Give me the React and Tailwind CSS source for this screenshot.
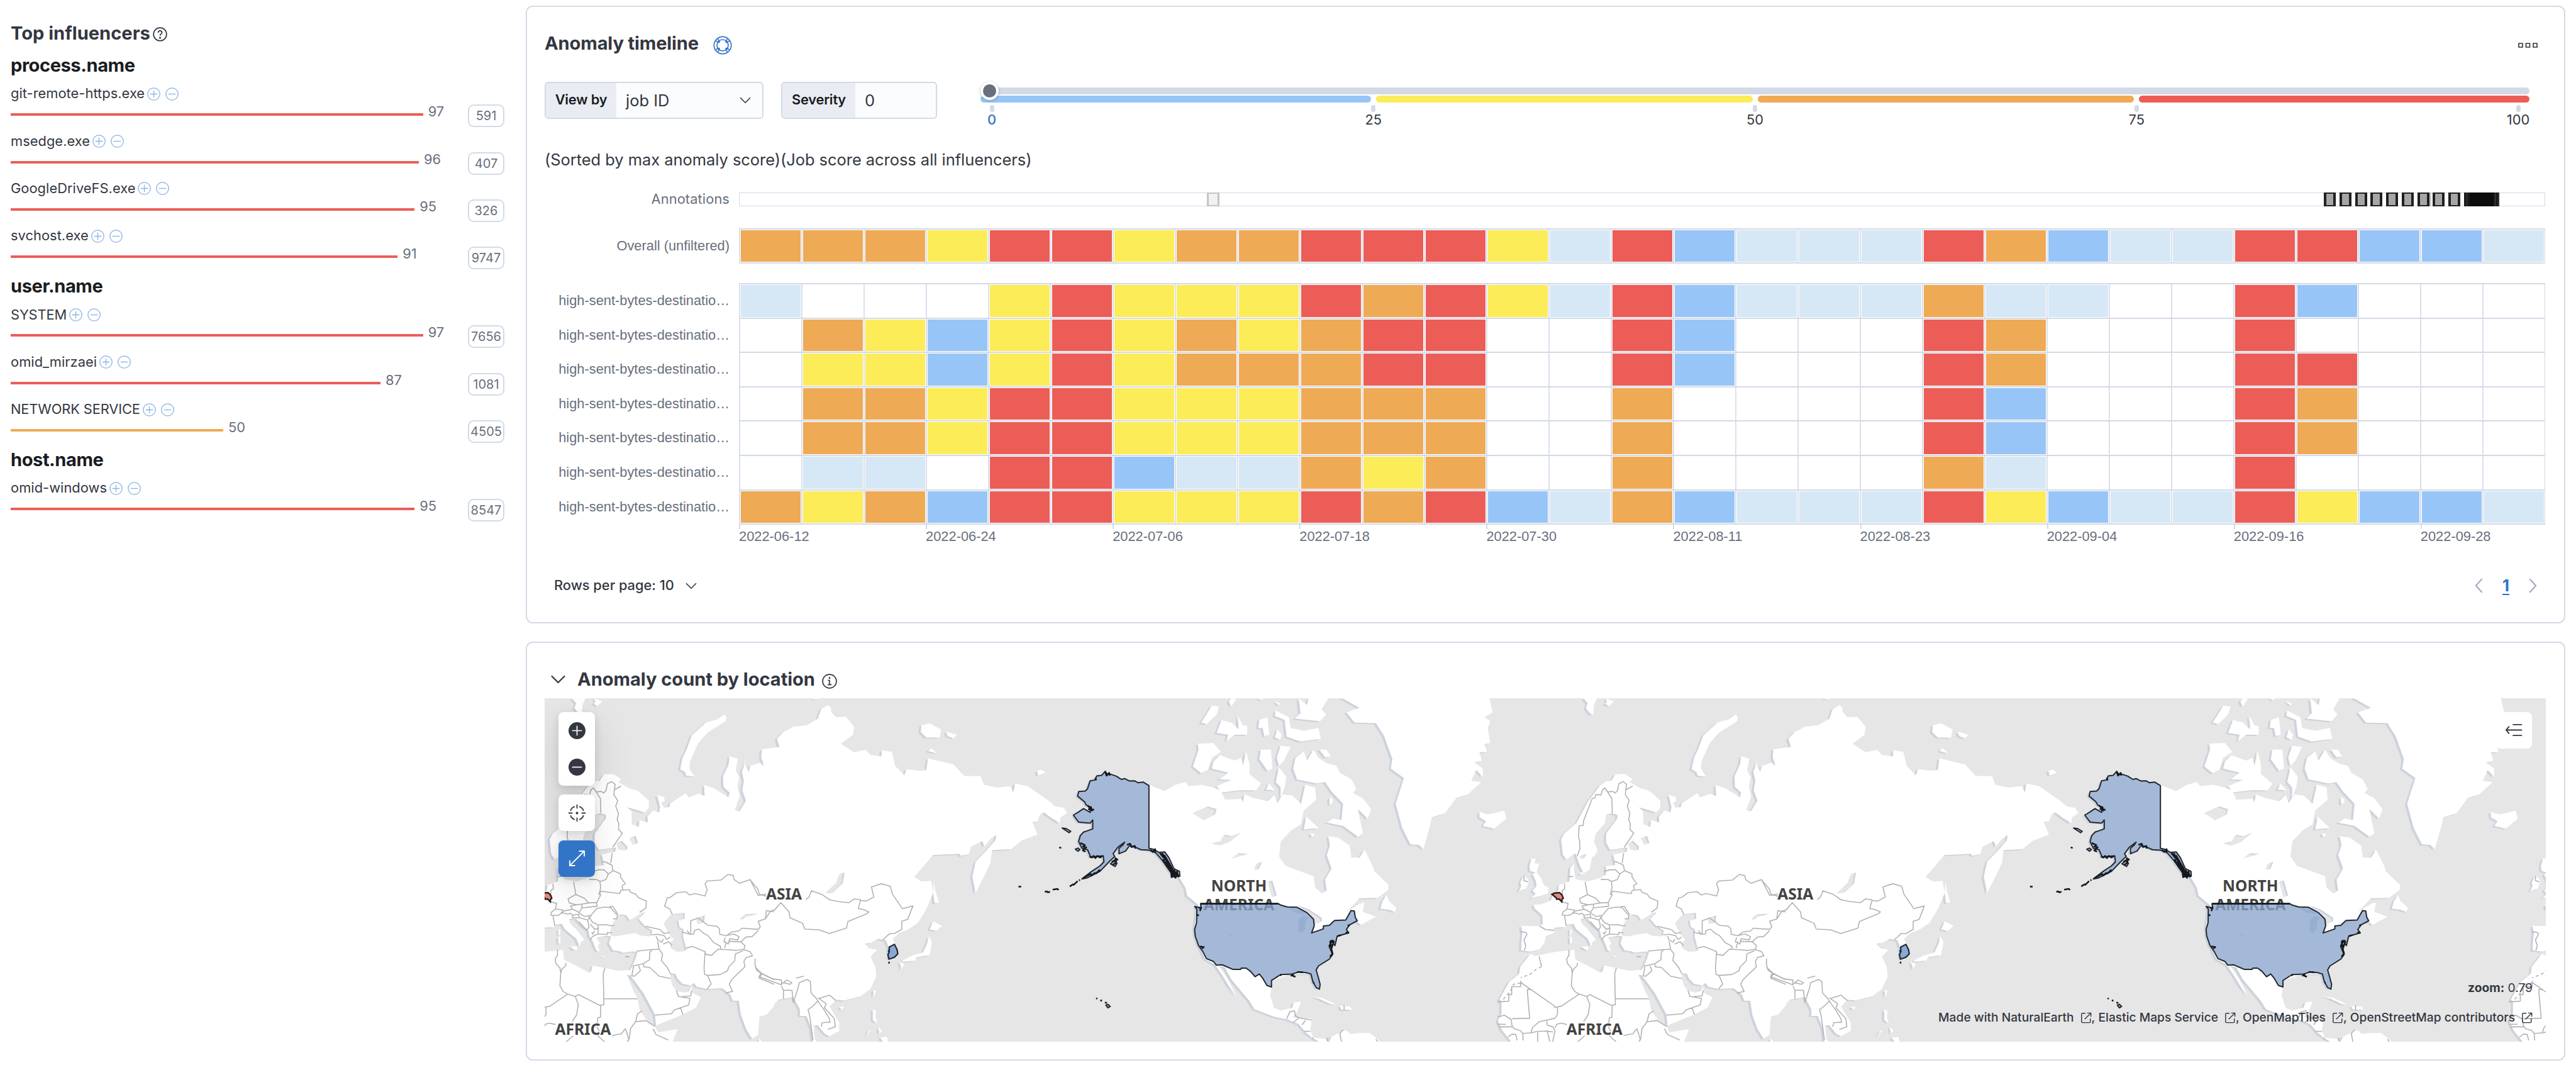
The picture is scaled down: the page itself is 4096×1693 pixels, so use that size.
import React from "react";

const SECTIONS = [
  {
    name: "process.name",
    items: [
      ["git-remote-https.exe", 97, 591],
      ["msedge.exe", 96, 407],
      ["GoogleDriveFS.exe", 95, 326],
      ["svchost.exe", 91, 9747],
    ],
  },
  {
    name: "user.name",
    items: [
      ["SYSTEM", 97, 7656],
      ["omid_mirzaei", 87, 1081],
      ["NETWORK SERVICE", 50, 4505],
    ],
  },
  { name: "host.name", items: [["omid-windows", 95, 8547]] },
];

const CELL = {
  R: "bg-[#ec5d57]",
  O: "bg-[#efaa55]",
  Y: "bg-[#fbec58]",
  B: "bg-[#98c5f7]",
  L: "bg-[#d6e7f5]",
  ".": "bg-white",
};

const OVERALL = "OOOYRRYOORRRYLRBLLLROBLLRRBBL";
const LANES = [
  "L...YRYYYRORYLRBLLLOLL..RB...",
  ".OYBYRYOYORR..RB...RO...R....",
  ".YYBYRYOOORR..RB...RO...RR...",
  ".OOYRRYYYOOO..O....RB...RO...",
  ".OOYRRYYYOOO..O....RB...RO...",
  ".LL.RRBLLOYO..O....OL...R....",
  "OYOBRRYYYRORBLOBLLLRYBLLRYBBL",
];
const DATES = [
  "2022-06-12",
  "2022-06-24",
  "2022-07-06",
  "2022-07-18",
  "2022-07-30",
  "2022-08-11",
  "2022-08-23",
  "2022-09-04",
  "2022-09-16",
  "2022-09-28",
];

function FilterIcon({ minus }) {
  return (
    <svg viewBox="0 0 16 16" className="h-[21px] w-[21px] shrink-0" fill="none" stroke="#8ab2e2" strokeWidth="1">
      <circle cx="8" cy="8" r="7.4" />
      <path d={minus ? "M3.6 8h8.8" : "M3.6 8h8.8M8 3.6v8.8"} />
    </svg>
  );
}

function Chevron({ className }) {
  return (
    <svg viewBox="0 0 24 14" className={className} fill="none" stroke="currentColor" strokeWidth="2.2" strokeLinecap="round" strokeLinejoin="round">
      <path d="M2 2l10 10L22 2" />
    </svg>
  );
}

function Influencer({ item }) {
  const [name, score, total] = item;
  const upper = name === name.toUpperCase();
  return (
    <div className="h-[75.35px]">
      <div className="flex h-[40px] items-center pt-[2px]">
        <span
          className={
            "whitespace-nowrap text-[21.84px] leading-none text-[#343741] " + (upper ? "tracking-[-0.12px]" : "tracking-[0.05px]")
          }
        >
          {name}
        </span>
        <span className="ml-[4px] flex gap-[8px]">
          <FilterIcon />
          <FilterIcon minus />
        </span>
      </div>
      <div className="flex items-start">
        <div className="flex w-[727px] items-start">
          <div
            className={"mt-[12px] h-[4px] " + (score > 74 ? "bg-[#ec5d57]" : "bg-[#efaa55]")}
            style={{ width: score * 6.76 }}
          />
          <span className="ml-[8px] text-[21.84px] leading-[19px] text-[#69707d]">{score}</span>
        </div>
        <div className="-mt-[2px] flex h-[36px] w-[58px] items-center justify-center rounded-[9px] border-2 border-[#d3dae6] text-[20px] leading-none text-[#69707d]">
          {total}
        </div>
      </div>
    </div>
  );
}

function Sidebar() {
  return (
    <aside className="w-[836px] shrink-0 pl-[17px] pt-[26px]">
      <div className="flex h-[52.5px] items-center">
        <h2 className="text-[29.1px] font-bold leading-none text-[#343741]">Top influencers</h2>
        <svg viewBox="0 0 16 16" className="ml-[4px] mt-[4px] h-[23px] w-[23px]" fill="none" stroke="#343741" strokeWidth="1.2">
          <circle cx="8" cy="8" r="7.2" />
          <path d="M5.9 6.2c0-1.3.9-2.1 2.1-2.1s2.1.8 2.1 1.9c0 1.5-2.1 1.7-2.1 3.5" />
          <circle cx="8" cy="11.9" r=".5" fill="#343741" />
        </svg>
      </div>
      {SECTIONS.map((s) => (
        <section key={s.name}>
          <h3 className="flex h-[49.8px] items-center text-[29.1px] font-bold leading-none tracking-[-0.45px] text-[#1a1c21]">
            {s.name}
          </h3>
          {s.items.map((i) => (
            <Influencer key={i[0]} item={i} />
          ))}
        </section>
      ))}
    </aside>
  );
}

function Lane({ label, cells, className }) {
  return (
    <div className="flex">
      <div className="flex w-[309px] shrink-0 items-center justify-end whitespace-nowrap pr-[15px] pt-[2px] font-['Liberation_Sans',Arial,sans-serif] text-[21.84px] text-[#69707d]">
        {label}
      </div>
      <div className={"flex w-[2872px] border-r border-t-2 border-[#d3dae6] " + className}>
        {cells.split("").map((c, i) => (
          <div key={i} className="flex-1 border-l-2 border-[#dbe0ec] p-px">
            <div className={"h-full " + CELL[c]} />
          </div>
        ))}
      </div>
    </div>
  );
}

function Severity() {
  return (
    <div className="relative ml-[69px] w-[2463px] pt-[9px]">
      <div className="h-[11px] rounded-full bg-[#d3dae6]" />
      <div className="mt-[2px] flex h-[11px] gap-[8px]">
        <div className="w-[621px] rounded-[6px] bg-[#98c5f7]" />
        <div className="w-[599px] rounded-[6px] bg-[#fbec58]" />
        <div className="w-[598px] rounded-[6px] bg-[#efaa55]" />
        <div className="flex-1 rounded-[6px] bg-[#ec5d57]" />
      </div>
      <div className="mt-[4px] flex justify-between px-[18px] text-[21.84px] leading-none text-[#343741]">
        {[0, 25, 50, 75, 100].map((v) => (
          <div key={v} className="flex w-0 flex-col items-center">
            <div className="h-[11px] w-[7px] shrink-0 rounded-full bg-[#d3dae6]" />
            <span className={"mt-[2px] " + (v === 0 ? "font-medium text-[#2f74c6]" : "")}>{v}</span>
          </div>
        ))}
      </div>
      <div className="absolute left-0 top-0 h-[29px] w-[29px] rounded-full border-[4px] border-white bg-[#69707d] shadow-[0_1px_4px_rgba(0,0,0,0.25)]" />
    </div>
  );
}

function Annotations() {
  return (
    <div className="mt-[32px] flex">
      <div className="flex w-[309px] items-center justify-end pr-[15px] text-[21.84px] leading-none tracking-[0.1px] text-[#69707d]">Annotations</div>
      <div className="relative h-[22px] w-[2872px] border border-[#d3dae6]">
        <div className="absolute -top-px left-[743px] h-[22px] w-[20px] border-x-[3px] border-y-2 border-[#c4c4c4] bg-[#f1f1f1]" />
        {[0, 1, 2, 3, 4, 5, 6, 7, 8].map((i) => (
          <div
            key={i}
            className="absolute -top-px h-[22px] w-[19px] border-x-4 border-y-2 border-[#202020] bg-[#a6a6a6]"
            style={{ left: 2519 + i * 24.75 }}
          />
        ))}
        <div className="absolute -top-px left-[2687px] h-[22px] w-[3px] bg-[#c8c8c8]" />
        <div className="absolute -top-px left-[2742px] h-[22px] w-[56px] bg-[repeating-linear-gradient(90deg,#1a1a1a_0_4px,#444444_4px_5px)]" />
        <div className="absolute -top-px left-[2751px] h-[22px] w-[38px] bg-[#0c0c0c]" />
      </div>
    </div>
  );
}

function Timeline() {
  return (
    <section className="flex h-[982px] w-[3243px] flex-col rounded-[11px] border-2 border-[#d3dae6] bg-white pl-[28px]">
      <header className="flex h-[115px] shrink-0 items-center">
        <h2 className="text-[29.1px] font-bold leading-none tracking-[-0.15px] text-[#343741]">Anomaly timeline</h2>
        <svg viewBox="0 0 32 32" className="ml-[23px] mt-[6px] h-[30px] w-[30px]" fill="none" stroke="#2f74c6" strokeWidth="1.8">
          <circle cx="16" cy="16" r="14.6" />
          <circle cx="16" cy="16" r="9.6" />
          <path d="M8 4.5l3 7M4.5 8.5l5.5 3M24 4.5l-3 7M27.5 8.5l-5.5 3M8 27.5l3-7M4.5 23.5l5.5-3M24 27.5l-3-7M27.5 23.5l-5.5-3" />
        </svg>
        <svg viewBox="0 0 32 8" className="ml-auto mr-[42px] mt-[6px] h-[8px] w-[31px]" fill="none" stroke="#343741" strokeWidth="1.7">
          <path d="M1 .9h6.200v6.200H1zM12.900 .9h6.200v6.200h-6.200zM24.800 .9h6.200v6.200h-6.200z" />
        </svg>
      </header>
      <div className="mt-[4px] flex h-[58.5px] shrink-0">
        <div className="flex w-[348px] overflow-hidden rounded-[6px] border-2 border-[#d3dae6] bg-[#fbfcfd] text-[25.48px] leading-none text-[#343741]">
          <span className="flex w-[112px] items-center justify-center bg-[#e9edf3] text-[21.84px] font-semibold tracking-[-0.2px] text-[#1a1c21]">View by</span>
          <span className="flex items-center pl-[15px]">job ID</span>
          <span className="ml-auto mr-[18px] flex items-center">
            <Chevron className="h-[11px] w-[18px]" />
          </span>
        </div>
        <div className="ml-[28px] flex w-[248px] overflow-hidden rounded-[6px] border-2 border-[#d3dae6] bg-[#fbfcfd] text-[25.48px] leading-none text-[#343741]">
          <span className="flex w-[116px] items-center justify-center bg-[#e9edf3] text-[21.84px] font-semibold tracking-[-0.2px] text-[#1a1c21]">Severity</span>
          <span className="flex items-center pl-[15px]">0</span>
        </div>
        <Severity />
      </div>
      <p className="mt-[45px] h-[40px] shrink-0 text-[25.48px] leading-[40px] tracking-[-0.04px] text-[#343741]">
        (Sorted by max anomaly score)(Job score across all influencers)
      </p>
      <Annotations />
      <div className="mt-[35px]">
        <Lane label="Overall (unfiltered)" cells={OVERALL} className="h-[56.5px] border-b-2" />
      </div>
      <div className="mt-[31px]">
        {LANES.map((c, i) => (
          <Lane
            key={i}
            label="high-sent-bytes-destinatio…"
            cells={c}
            className={i === LANES.length - 1 ? "h-[56.6px] border-b-2" : "h-[54.6px]"}
          />
        ))}
      </div>
      <div className="ml-[309px] flex font-['Liberation_Sans',Arial,sans-serif] text-[21.84px] leading-[20px] text-[#69707d]">
        {DATES.map((d) => (
          <div key={d} className="w-[297.1px] shrink-0">
            <div className="mb-[2px] h-[7px] w-[2px] bg-[#d3dae6]" />
            {d}
          </div>
        ))}
      </div>
      <footer className="mt-[48px] flex h-[40px] items-center pl-[15px] text-[21.84px] font-medium leading-none text-[#343741]">
        Rows per page: 10
        <Chevron className="ml-[18px] h-[11px] w-[18px]" />
        <div className="ml-auto mr-[43px] flex items-center gap-[31px] text-[#a5aebd]">
          <svg viewBox="0 0 14 26" className="h-[24px] w-[13px]" fill="none" stroke="currentColor" strokeWidth="2.4" strokeLinecap="round">
            <path d="M12 2L2 13l10 11" />
          </svg>
          <span className="text-[25.48px] font-bold text-[#2f74c6] underline decoration-2 underline-offset-[4px]">1</span>
          <svg viewBox="0 0 14 26" className="h-[24px] w-[13px]" fill="none" stroke="currentColor" strokeWidth="2.4" strokeLinecap="round">
            <path d="M2 2l10 11L2 24" />
          </svg>
        </div>
      </footer>
    </section>
  );
}

/* Base map. Three drawing grids are used: Europe/Africa, Asia and the Americas. */
const EU = "translate(793 1200) scale(.35714 .40816)";
const AS = "translate(910 1120) scale(.57398 .4719)";
const NA = "translate(1750 1120) scale(.57398 .4719)";

const ALASKA =
  "449,533 432,520 415,522 405,515 390,516 375,507 365,510 350,498 330,490 323,492 316,480 305,495 290,497 285,512 270,515 262,545 255,553 235,555 232,572 253,593 258,605 272,612 270,632 250,618 235,630 219,642 235,668 270,672 278,660 278,693 262,700 250,705 240,718 235,740 245,765 262,770 272,798 285,795 310,793 312,815 300,830 275,850 245,878 260,875 300,850 330,812 345,795 340,785 355,760 375,742 370,752 358,765 358,785 378,775 390,755 410,762 425,770 450,772 470,782 490,810 510,845 525,870 543,868 542,850 525,840 510,800 497,778 480,780 462,768 449,765";
const USA =
  "606,970 843,970 850,975 870,982 900,983 930,1003 950,1027 952,1052 944,1078 980,1063 980,1052 998,1050 1014,1032 1048,1030 1064,995 1074,997 1077,1020 1083,1033 1060,1048 1050,1065 1057,1078 1022,1090 1015,1125 1003,1105 998,1130 1008,1158 998,1175 965,1200 958,1215 965,1245 970,1268 968,1286 958,1280 948,1258 942,1230 928,1225 905,1222 885,1230 850,1232 822,1254 822,1278 808,1272 795,1245 785,1230 772,1240 758,1220 745,1208 730,1208 728,1213 705,1213 672,1196 654,1197 645,1183 624,1173 612,1145 600,1125 590,1090 588,1065 594,1040 595,990 588,980 608,985";

const LAND_EU = [
  "735,372 780,370 820,392 805,405 830,418 860,432 900,442 925,460 955,485 955,515 935,535 880,520 850,513 870,530 872,585 905,597 910,568 950,578 948,552 975,527 1005,535 1010,510 995,460 1030,468 1032,485 1015,495 1030,515 1055,512 1060,495 1135,452 1150,470 1200,455 1228,465 1225,418 1270,430 1345,470 1350,450 1320,425 1318,380 1345,330 1350,295 1390,305 1380,355 1397,385 1388,425 1400,465 1375,525 1398,530 1430,485 1412,440 1420,400 1410,360 1425,330 1425,305 1430,340 1445,362 1455,335 1500,322 1520,340 1505,300 1508,265 1570,258 1570,1360 1530,1400 1495,1410 1490,1485 1460,1503 1430,1460 1405,1400 1395,1340 1365,1340 1355,1315 1320,1290 1310,1287 1240,1290 1190,1280 1175,1265 1160,1275 1120,1268 1095,1245 1085,1225 1060,1222 1060,1245 1070,1275 1090,1300 1130,1305 1150,1300 1165,1280 1165,1305 1210,1325 1185,1370 1120,1400 990,1447 985,1400 930,1310 885,1255 870,1240 862,1212 875,1190 890,1160 900,1130 870,1130 830,1135 810,1128 780,1125 760,1095 770,1065 745,1062 715,1068 700,1070 715,1095 705,1105 715,1128 698,1125 680,1085 665,1065 660,1040 630,1020 600,990 565,990 570,1010 600,1035 640,1080 622,1090 617,1108 600,1075 545,1035 530,1012 500,1015 490,1025 435,1028 435,1050 395,1065 390,1090 365,1120 320,1130 275,1125 275,1095 280,1055 275,1020 365,1022 380,1010 378,975 340,945 335,930 375,928 420,910 430,885 455,870 460,845 510,830 515,770 535,755 532,775 540,820 600,830 660,815 690,800 690,765 735,760 725,715 790,703 795,685 710,695 690,665 690,625 745,560 745,545 715,538 690,545 685,580 640,625 630,660 648,695 635,720 620,728 610,780 580,795 560,760 540,710 495,735 478,715 470,650 485,625 545,580 600,490 660,420 690,402 715,400",
  "320,1140 345,1150 400,1138 450,1130 510,1125 535,1122 540,1165 600,1190 660,1220 672,1215 680,1190 740,1200 800,1212 862,1208 868,1232 848,1230 880,1300 900,1330 910,1380 950,1430 985,1450 1000,1475 1095,1462 1070,1520 230,1520 180,1465 160,1425 178,1395 178,1345 168,1335 215,1260 265,1225 270,1195 310,1150",
  "325,732 345,732 340,752 362,755 350,790 375,820 385,845 410,858 405,882 370,892 320,903 345,882 330,870 350,848 345,825 330,800 345,792 318,785 315,765",
  "285,808 300,812 312,830 300,860 262,872 275,850 270,835",
  "580,47 645,47 630,75 627,118 612,112 590,88 600,68",
  "690,47 728,60 703,80 685,70 694,60",
  "1325,115 1335,130 1330,145 1240,195 1195,240 1155,320 1155,350 1178,380 1138,378 1132,362 1108,350 1120,300 1140,265 1165,205 1235,150 1285,138",
  "570,1108 605,1108 602,1124 585,1120",
  "514,1035 522,1035 520,1058 514,1058",
  "512,1068 523,1066 522,1095 514,1095",
  "718,1148 745,1151 730,1153",
  "555,795 578,790 575,802",
];
const SEA_EU = [
  "790,1000 815,970 845,975 860,995 875,990 920,965 938,962 905,990 935,1020 972,1040 968,1062 920,1058 900,1048 860,1052 800,1062 775,1058 775,1035",
  "1035,1005 1070,970 1130,965 1130,990 1098,995 1105,1025 1125,1035 1122,1065 1130,1090 1140,1125 1100,1127 1068,1110 1068,1090 1085,1075 1060,1050",
  "805,665 820,655 850,680 850,695 815,690",
  "867,642 890,635 902,665 885,670",
  "1195,985 1228,975 1226,1005 1200,1008",
  "1408,985 1430,970 1490,968 1430,980 1416,992",
  "565,720 595,712 580,732",
];
const BORDER_EU =
  "M548,722L562,690 560,655 555,640 558,592 578,590 580,570 622,475 636,472 640,458 665,460 672,438 684,430 698,447 722,445 734,452 746,440 752,412 774,403 790,415 786,438 820,422M684,430L718,475 720,538M786,438L784,460 803,484 793,508 806,540 800,566 808,582 807,608 825,624 778,684M776,708L768,752M727,745L740,746 774,760 780,784 816,797 817,812 840,840 824,848 828,865M680,787L710,780 735,780 757,798 745,822 716,830 700,822 663,821M757,798L780,784M716,830L719,858 711,885 722,872 812,882 818,868 860,865 864,876 890,884 905,900 943,914 940,944 910,962M587,832L598,886 640,902 660,922 700,920 705,912 720,886 711,885M598,886L560,904 566,922 600,930 627,927 660,922M627,927L628,943 614,963 600,956 580,948 572,935 600,930M628,943L702,936 700,920M700,946L672,975 640,980 614,965M700,946L738,940 768,942 795,970 802,970 798,990 780,990M760,940L778,936 802,968M486,840L488,862 476,868 474,892M473,917L504,924 498,948 534,952 532,965 506,976 475,974 478,962 498,948M534,957L580,950M486,976L495,1020M524,962L560,970 572,966 582,975 612,970 614,985 582,986 582,975M614,985L655,995 672,978M655,995L660,1012 662,1026 650,1038 612,1002M660,980L680,1005 705,1015 708,1030 690,1035 668,1012M708,1016L748,1015 770,1020 786,1018M708,1030L706,1055 752,1057 752,1048 775,1050M706,1055L680,1065 668,1080M690,1042L680,1055 676,1048M365,1022L394,1036 435,1039M272,1045L298,1048 303,1056 288,1080 297,1105 290,1125M940,1022L1010,1036 1030,1053 1058,1048M970,1058L1000,1056 1030,1062 1042,1078 1060,1068M990,1064L998,1080 1018,1090 1026,1076M998,1086L1005,1120 960,1122 895,1128M1005,1120L1022,1140 1016,1168 1045,1198 1060,1225M1025,1098L1052,1088 1068,1104M974,1120L960,1132 958,1165 928,1182 875,1192M928,1182L930,1195 960,1198 1005,1235 1060,1245M905,1190L914,1212 885,1235 872,1234 880,1192M1138,1115L1168,1108 1230,1130 1225,1200 1228,1228 1242,1232 1260,1268 1240,1290M1230,1130L1232,1142 1262,1146 1292,1120 1344,1122 1384,1125 1420,1120M1160,1056L1115,1046M1142,1040L1155,1056 1175,1055 1178,1040 1200,1034 1220,1050 1245,1062 1270,1090 1306,1108 1306,1120M1160,1056V998L1196,986 1245,1018 1286,1021 1300,1032 1302,1056 1335,1062 1360,1046 1395,1042 1410,1030 1490,1035 1500,1024 1490,1000 1525,990 1530,955 1568,960M1328,1070L1322,1088 1344,1098 1350,1075 1390,1080 1396,1066 1370,1055 1330,1062M1344,1086L1405,1088 1430,1068 1460,1066 1490,1040M1405,1088L1425,1105 1420,1122 1450,1130 1462,1148 1430,1156 1420,1172 1425,1195 1360,1250 1348,1270 1365,1300 1330,1308M1242,1232L1305,1228 1340,1212 1345,1196 1375,1170 1378,1140 1416,1126M1326,1115L1334,1086M1070,972L1058,948 1032,936 1045,900 1060,898 1090,878 1135,874 1155,888 1180,882 1230,892 1240,865 1230,840 1240,828 1308,824 1342,800 1368,805 1372,822 1398,838 1450,822 1490,890 1530,884M1475,1160L1474,1185 1482,1210 1508,1225 1568,1250M1508,1225L1494,1243 1568,1270M362,1150L374,1194M508,1122V1145L497,1162 500,1180 520,1200 524,1222 520,1276 535,1300 558,1312 595,1322 610,1314 720,1362M524,1222L530,1205 548,1190 550,1178M740,1200L732,1225 735,1358H720L718,1412H706L702,1440M735,1332H900M158,1345L214,1342V1314H228V1280H272V1255M272,1262L436,1362 438,1369 470,1364 558,1312M304,1292H325M304,1292L316,1415 230,1417M452,1366V1398L440,1415 362,1430 330,1455 322,1478 282,1480M595,1322L610,1356 602,1400 580,1430M160,1410L192,1402 225,1420 230,1448 240,1460 270,1468 282,1480 284,1510M158,1441H200M165,1452H230M398,1422L402,1444 430,1452 440,1470 428,1517M322,1478L350,1472 400,1470 430,1474M355,1475V1517M402,1472L415,1517M440,1455L450,1440 470,1436 498,1442M210,1495L230,1483 248,1485 255,1510M922,1384L900,1396 890,1430 865,1460 860,1500 850,1517M890,1430L940,1425 985,1450M985,1402L1065,1396 1080,1380 1110,1370 1122,1400M1110,1370L1150,1358 1156,1330 1100,1322 1090,1298M1120,1322L1160,1320 1164,1296M975,1460L990,1485 1050,1508M550,1517L585,1490M700,1450L712,1470 705,1490 740,1517M775,1490L790,1486M790,1486L820,1482 840,1460 850,1485 858,1510";

const LAND_AS = [
  "700,450 695,482 715,455 740,465 735,400 788,390 780,360 800,335 830,315 870,310 905,285 915,250 935,235 945,245 945,260 960,280 990,278 1015,315 1012,345 975,378 1015,410 1050,400 1065,420 1098,425 1100,402 1130,408 1140,460 1168,495 1175,472 1215,478 1235,475 1240,432 1318,455 1350,497 1400,498 1410,530 1450,540 1490,535 1500,558 1505,525 1543,535 1603,585 1628,610 1653,615 1663,635 1643,650 1641,672 1613,650 1593,632 1581,640 1573,665 1558,668 1573,715 1523,738 1493,768 1435,772 1430,820 1410,870 1385,930 1375,870 1385,815 1420,770 1445,735 1448,716 1430,730 1412,758 1405,738 1370,760 1365,785 1340,793 1335,785 1255,790 1220,840 1198,870 1220,888 1250,885 1256,930 1235,990 1210,1040 1180,1065 1150,1080 1132,1100 1145,1130 1148,1155 1122,1175 1120,1130 1112,1105 1088,1100 1065,1115 1048,1118 1060,1135 1085,1140 1065,1165 1080,1205 1082,1240 1065,1285 1035,1312 985,1328 960,1325 940,1350 970,1410 970,1440 940,1460 925,1450 905,1420 893,1420 895,1470 905,1485 890,1485 885,1430 870,1385 850,1385 850,1360 830,1315 810,1320 785,1325 760,1355 725,1390 700,1390",
  "1258,885 1262,920 1273,965 1260,968 1256,930",
  "1256,1035 1283,1052 1265,1070 1245,1065",
  "1243,1090 1252,1112 1245,1160 1205,1168 1200,1180 1160,1185 1165,1178 1190,1162 1225,1150 1238,1115",
  "1153,1185 1168,1192 1160,1212",
  "1074,1290 1082,1292 1075,1318",
  "970,1352 985,1350 978,1362",
  "1072,1362 1082,1365 1080,1390 1086,1412 1072,1400",
  "1095,1465 1115,1462 1120,1485 1105,1485",
  "1090,1425 1100,1440 1092,1450",
  "1060,1440 1066,1438 1052,1462",
  "726,1465 736,1485 727,1485",
  "1220,310 1245,303 1280,325 1275,355 1235,355 1218,335",
  "1295,333 1328,345 1318,358 1300,350",
  "1240,405 1250,395 1267,412",
  "890,210 912,210 895,214",
];
const SEA_AS = ["986,855 980,895 950,928 932,928 965,890 975,858"];
const BORDER_AS =
  "M697,880L722,915 727,935 748,942M868,955L878,945 885,922 918,936 940,955 968,962 1000,966 1015,952 1035,955 1028,988 1040,990 1060,1000 1055,1006 996,1036 992,1060 940,1080 908,1066 865,1064 858,1042 820,1022 817,1000 792,966 774,992 760,998 746,1025M1035,958L1052,960 1075,945 1068,908 1098,896 1125,905 1132,935 1162,988 1194,978 1178,1028 1160,1035 1160,1065 1138,1080 1124,1080 1102,1104M714,1205L732,1226 766,1248 794,1252V1270L726,1240 732,1226M794,1268L810,1252 826,1262 820,1268 800,1262M794,1275L800,1290V1322M800,1290H826L830,1335 845,1280 848,1262 872,1250 882,1258 884,1300 900,1320 905,1330 888,1350 875,1362 880,1385 886,1440 890,1475M905,1330L925,1365 940,1395 942,1408 918,1410 915,1425M910,1320L940,1308 960,1328M905,1318L930,1340 925,1355 955,1395 958,1425 935,1435M838,1245L862,1238";

const LAND_NA = [
  ALASKA,
  USA,
  "449,530 495,553 530,530 560,520 570,535 610,530 650,542 668,552 680,585 730,582 735,595 740,565 770,580 810,590 830,568 840,598 855,565 885,570 912,600 925,530 955,540 958,585 920,625 912,675 880,700 850,740 845,795 865,830 905,848 950,868 955,910 975,932 990,920 985,880 1005,840 990,790 1000,755 995,720 1025,725 1060,755 1065,800 1090,800 1105,770 1130,830 1135,850 1178,900 1178,918 1145,948 1090,950 1050,1000 1090,970 1105,965 1100,1000 1140,1018 1095,1048 1080,1035 1050,1060 1020,1090 1000,1150 960,1210 965,1240 940,1230 880,1230 825,1255 818,1310 830,1355 850,1365 885,1355 890,1335 912,1332 900,1370 885,1390 945,1395 940,1440 950,1465 985,1470 995,1485 965,1480 930,1450 905,1415 870,1398 830,1388 770,1360 755,1330 700,1250 680,1205 662,1200 690,1250 715,1310 690,1270 670,1230 650,1195 620,1175 600,1120 588,1060 595,985 600,975 565,940 560,910 540,870 525,850 495,790 450,770",
  "995,1485 1005,1462 1040,1440 1050,1438 1062,1452 1090,1448 1120,1448 1145,1470 1155,1485",
  "945,1312 975,1318 1017,1342 1000,1340 965,1320",
  "1030,1348 1060,1350 1068,1362 1035,1362",
  "1172,938 1180,960 1202,985 1198,1000 1180,992 1153,988 1160,960",
  "640,238 662,240 655,270 625,305 608,300",
  "670,290 700,300 722,325 720,275 735,310 748,312 748,345 710,345 685,368 690,345 655,338",
  "785,290 810,280 815,345 800,350 795,320 782,320",
  "835,255 875,280 880,320 920,330 965,320 972,360 910,370 868,352 862,290 832,275",
  "840,325 853,345 848,362 832,355",
  "905,210 930,235 935,210 995,210 975,250 988,270 970,295 892,285 910,265",
  "692,222 700,210 715,212 700,240",
  "598,378 645,375 668,408 640,430 628,475 608,487 583,462 600,400",
  "665,420 710,440 730,430 735,460 745,405 755,455 755,490 790,525 775,550 725,550 670,558 655,535 700,512 662,510 690,485 640,470 645,445",
  "790,400 820,400 825,470 810,478 785,435",
  "850,385 880,390 860,440 845,460 838,430",
  "845,465 867,500 862,540 850,575 850,540 835,520",
  "895,430 920,405 930,440 950,400 965,430 990,450 1020,460 1030,485 1065,510 1080,545 1070,560 1100,580 1125,620 1115,655 1085,620 1100,710 1085,722 1040,682 990,670 1010,655 1035,660 1040,600 1005,555 985,520 960,525 900,510 888,470",
  "968,400 990,400 1002,425 985,428",
  "815,525 832,550 805,548",
  "928,648 965,690 920,695",
  "1000,575 1010,585 1003,605 998,595",
  "940,710 955,712 946,724",
  "782,208 800,212 790,216",
  "830,220 848,228 846,236",
  "1035,208 1090,245 1050,262 1075,300 1140,302 1165,350 1190,435 1185,470 1225,505 1200,600 1220,690 1245,750 1270,752 1284,768 1305,680 1310,650 1350,635 1385,578 1420,565 1460,520 1430,515 1445,475 1465,500 1465,470 1440,448 1462,440 1455,410 1478,408 1470,380 1488,375 1480,320 1488,295 1470,280 1495,262 1485,208",
  "1455,630 1480,640 1500,635 1530,625 1537,655 1500,692 1465,682 1475,665 1455,650",
  "108,478 122,474 134,485 112,496",
];
const SEA_NA = [
  "587,632 628,610 655,620 650,640 620,658 605,645",
  "643,745 670,740 680,715 700,720 728,708 695,740 670,752",
  "705,800 722,783 750,785",
  "780,820 793,815 783,842 774,840",
  "815,885 825,885 838,940 828,942",
  "900,975 935,990 975,1022 975,1035 955,1045 945,1010",
];

function Shapes({ list, grid, fill }) {
  return (
    <g transform={grid} fill={fill}>
      {list.map((p) => (
        <polygon key={p} points={p} />
      ))}
    </g>
  );
}

function AllLand({ fill }) {
  return (
    <>
      <Shapes list={LAND_EU} grid={EU} fill={fill} />
      <Shapes list={LAND_AS} grid={AS} fill={fill} />
      <Shapes list={LAND_NA} grid={NA} fill={fill} />
    </>
  );
}

function AllSeas({ fill }) {
  return (
    <>
      <Shapes list={SEA_EU} grid={EU} fill={fill} />
      <Shapes list={SEA_AS} grid={AS} fill={fill} />
      <Shapes list={SEA_NA} grid={NA} fill={fill} />
    </>
  );
}

function World({ labels }) {
  return (
    <>
      <g transform="translate(-4 2)">
        <AllLand fill="#cdd3dc" />
      </g>
      <AllLand fill="#ffffff" />
      <AllSeas fill="#cdd3dc" />
      <g transform="translate(-3 1.5)">
        <AllSeas fill="#e6e6e6" />
      </g>
      <g fill="none" stroke="#b2b2b2" strokeWidth="1.6" strokeLinejoin="round">
        <g transform={EU}>
          <path d={BORDER_EU} vectorEffect="non-scaling-stroke" />
          <path d="M374,1194L345,1208 320,1226 272,1242M272,1264L236,1270 222,1300 180,1340" strokeDasharray="5 4" vectorEffect="non-scaling-stroke" />
          <path d="M840,1152H860M288,806V826L308,832M508,809H528" vectorEffect="non-scaling-stroke" />
        </g>
        <g transform={AS}>
          <path d={BORDER_AS} vectorEffect="non-scaling-stroke" />
        </g>
        <g transform={NA}>
          <path
            d="M868,1395L878,1370 892,1366 895,1385 905,1392 888,1410M905,1392L945,1400M915,1418L925,1402M922,1442H940M948,1465L945,1472M1043,1345V1366M1040,1436L1030,1450 1035,1481M992,1465V1478M1140,1470L1145,1481"
            vectorEffect="non-scaling-stroke"
          />
        </g>
      </g>
      {labels && (
        <g fontFamily="'Noto Sans',sans-serif" fontWeight="700" fontSize="27" fill="#434343" stroke="#ffffff" strokeWidth="3" strokeOpacity="0.7" paintOrder="stroke" textAnchor="middle">
          <text x="1370" y="1570">ASIA</text>
          <text x="1019" y="1807">AFRICA</text>
          <text x="2165" y="1556">NORTH</text>
          <text x="2165" y="1589">AMERICA</text>
        </g>
      )}
      <g transform={NA} fill="#88a4cb" fillOpacity="0.77" stroke="#22272e" strokeWidth="2" strokeLinejoin="round">
        <polygon points={ALASKA} vectorEffect="non-scaling-stroke" />
        <polygon points={USA} vectorEffect="non-scaling-stroke" />
        <path d="M185,690l12,2 14,10 -5,5 -10,-8z M225,768l8,-4 6,6 -6,6z M332,822l10,-10 10,8 -6,12z M318,1345l6,-3 7,8 -7,5z" vectorEffect="non-scaling-stroke" />
      </g>
      <g transform={NA} fill="#7f9bc4" fillOpacity="0.35">
        <path d="M905,1030l12,-15 18,5 -8,12 -4,35 -12,12 -8,-10z" />
        <path d="M870,985l40,8 15,15 -30,-5z M690,1082l8,-2 6,10 -6,-2z" />
      </g>
      <g transform={NA} fill="none" stroke="#15181c" strokeWidth="2.6" strokeLinejoin="round">
        <path
          d="M606,970H843M482,782l12,18 -4,-16 10,22 -8,2 14,20 -6,-28 12,30 -10,-4 14,20 -4,-22 10,24 -8,0 14,20 -2,-22 8,20 -14,-14 10,22 -12,-22M496,790l22,46 10,30 -8,4 14,-18 6,20M516,846l2,26 8,-22 4,22 6,-24M262,606l12,16 -8,-2 16,2M272,610l4,18M240,745l14,8 -6,6 10,2 -10,12 8,4M268,795l8,4 4,-6 6,8 6,-8 8,6 8,-6M250,874l22,-14 2,6 10,-10 4,2 12,-14M336,815l14,-10 -2,14 -10,8M345,800l10,8M382,752l10,-4 4,12 10,-4 2,10M285,505l4,8M316,482l4,14 8,-10 2,10M208,906l10,-8 2,2 12,-14M236,884l3,-3M156,918l14,-3 4,4M132,926l6,-2 4,4 6,-3M52,906l8,1M176,761l6,3M288,1320l4,1M301,1327l5,2M315,1335l6,2M454,770l6,8 8,-10 0,12M600,985l8,0 -4,12M595,1010l6,4M604,1128l12,2 -6,6M1000,1108l6,24 -8,-6 10,-20 4,4 -8,26 4,18 -8,12M1022,1090l12,-4M1048,1076l10,2M1060,1048l-6,4M885,1228l4,10 6,2M900,1222l18,2M848,1232l4,4M948,1262l4,0M880,1236l10,-2"
          vectorEffect="non-scaling-stroke"
        />
      </g>
      <g transform={AS} fill="#88a9d3" stroke="#22272e" strokeWidth="2.2" strokeLinejoin="round">
        <polygon points="1138,1120 1146,1140 1148,1155 1138,1168 1121,1175 1118,1158 1122,1148 1122,1130" vectorEffect="non-scaling-stroke" />
        <path d="M1119,1188h5M1118,1145h6" strokeWidth="3" vectorEffect="non-scaling-stroke" />
      </g>
      <g transform={EU}>
        <polygon points="425,885 438,880 462,878 474,888 480,902 474,906 473,917 460,905 448,906 446,900" fill="#e48a78" stroke="#2b2022" strokeWidth="2.4" vectorEffect="non-scaling-stroke" />
      </g>
    </>
  );
}

function MapCanvas() {
  return (
    <svg viewBox="952 1219 3496 599.6" preserveAspectRatio="none" className="block h-full w-full">
      <rect x="952" y="1219" width="3496" height="600" fill="#e6e6e6" />
      <World labels />
      <g transform="translate(1767 0)">
        <World labels />
      </g>
      <g transform="translate(3534 0)">
        <World />
      </g>
    </svg>
  );
}

function External() {
  return (
    <svg viewBox="0 0 20 20" className="ml-[10px] inline-block h-[18px] w-[18px]" fill="none" stroke="#343741" strokeWidth="1.6">
      <path d="M9 2H3.5A1.5 1.5 0 0 0 2 3.500V17a1.500 1.500 0 0 0 1.500 1.500H16a1.500 1.500 0 0 0 1.500-1.500V11M12 1.500h6.500V8M18 2L7.500 12.500" />
    </svg>
  );
}

const CONTROL = "flex w-[58px] items-center justify-center rounded-[8px] shadow-[0_5px_14px_rgba(0,0,0,0.12),0_20px_60px_rgba(0,0,0,0.12)]";

function MapPanel() {
  return (
    <section className="mt-[29px] h-[666px] w-[3243px] rounded-[11px] border-2 border-[#d3dae6] bg-white pl-[28px]">
      <header className="flex h-[87.5px] items-center pt-[28px] text-[#343741]">
        <Chevron className="ml-[9px] h-[14px] w-[25px]" />
        <h2 className="ml-[18px] text-[29.1px] font-bold leading-none tracking-[-0.05px]">Anomaly count by location</h2>
        <svg viewBox="0 0 16 16" className="ml-[11px] mt-[6px] h-[24px] w-[24px]" fill="none" stroke="#343741" strokeWidth="1.100">
          <circle cx="8" cy="8" r="7.300" />
          <path d="M6.200 7H8v4.600M6 11.600h4.200" />
          <circle cx="8" cy="4.500" r=".4" fill="#343741" />
        </svg>
      </header>
      <div className="relative h-[546px] w-[3182px] overflow-hidden">
        <MapCanvas />
        <div className="absolute left-[22px] top-[22px] flex flex-col gap-[14.5px]">
          <div className={CONTROL + " h-[117px] flex-col gap-[31px] bg-white"}>
            <svg viewBox="0 0 16 16" className="h-[27px] w-[27px]" stroke="#ffffff" strokeWidth="1">
              <circle cx="8" cy="8" r="8" fill="#343741" stroke="none" />
              <path d="M3.400 8h9.200M8 3.400v9.200" />
            </svg>
            <svg viewBox="0 0 16 16" className="h-[27px] w-[27px]" stroke="#ffffff" strokeWidth="1">
              <circle cx="8" cy="8" r="8" fill="#343741" stroke="none" />
              <path d="M3.400 8h9.200" />
            </svg>
          </div>
          <div className={CONTROL + " h-[58px] bg-white"}>
            <svg viewBox="0 0 32 32" className="h-[29px] w-[29px]" fill="none" stroke="#343741" strokeWidth="2">
              <path d="M12 4.500A12.200 12.200 0 0 0 4.500 12M20 4.500A12.200 12.200 0 0 1 27.500 12M12 27.500A12.200 12.200 0 0 1 4.500 20M20 27.500A12.200 12.200 0 0 0 27.500 20M16 1v7M16 24v7M1 16h7M24 16h7" />
              <circle cx="16" cy="16" r="1.200" fill="#343741" />
            </svg>
          </div>
          <div className={CONTROL + " h-[58px] bg-[#3275c8]"}>
            <svg viewBox="0 0 28 28" className="h-[27px] w-[27px]" fill="none" stroke="#ffffff" strokeWidth="2" strokeLinecap="round" strokeLinejoin="round">
              <path d="M18 2h8v8M26 2L2 26M2 18v8h8" />
            </svg>
          </div>
        </div>
        <div className="absolute right-[22px] top-[22px] flex h-[58px] w-[58px] items-center justify-center rounded-[8px] bg-white">
          <svg viewBox="0 0 28 24" className="h-[23px] w-[28px]" fill="none" stroke="#343741" strokeWidth="2" strokeLinecap="round">
            <path d="M13 3h14M1.500 12H27M13 21h14M6 6.500L1.500 12 6 17.500" />
          </svg>
        </div>
        <div className="absolute bottom-[75px] right-[21px] text-[19.2px] leading-none text-[#343741]">
          <b>zoom:</b> 0.79
        </div>
        <div className="absolute bottom-[28px] right-[21px] flex items-center whitespace-nowrap text-[19.2px] font-medium leading-none text-[#343741]">
          Made with NaturalEarth <External />,&nbsp;Elastic Maps Service <External />,&nbsp;OpenMapTiles <External />,&nbsp;OpenStreetMap contributors <External />
        </div>
      </div>
    </section>
  );
}

export default function App() {
  return (
    <div className="flex h-[1693px] w-[4096px] overflow-hidden bg-white font-['Inter',sans-serif]">
      <Sidebar />
      <main className="pt-[9px]">
        <Timeline />
        <MapPanel />
      </main>
    </div>
  );
}
